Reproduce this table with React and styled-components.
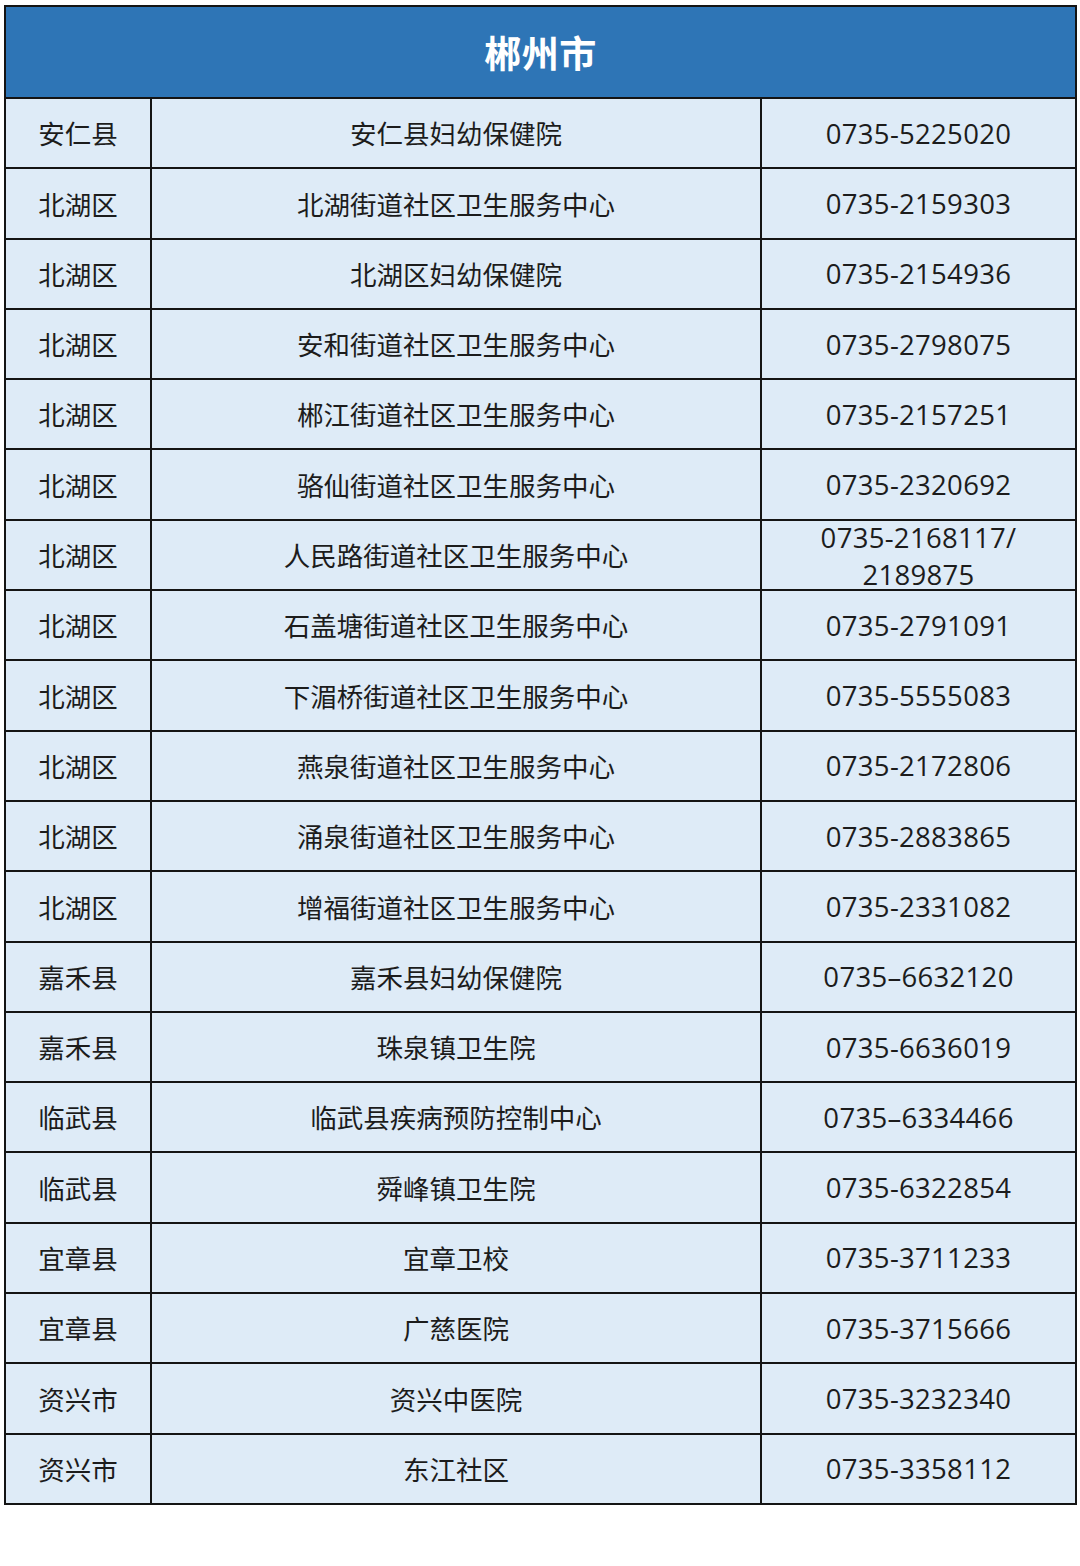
import React from "react";
import styled, { createGlobalStyle } from "styled-components";

const Global = createGlobalStyle`
  html, body { margin: 0; padding: 0; background: #ffffff; }
  body { font-family: "Noto Sans CJK SC", "Noto Sans", sans-serif; }
`;

const Page = styled.div`
  width: 1080px;
  height: 1566px;
  padding: 5px 0 0 4px;
  box-sizing: border-box;
  background: #fff;
`;

const Table = styled.table`
  width: 1071px;
  border-collapse: collapse;
  table-layout: fixed;
  border: 2px solid #141414;
`;

const HeaderCell = styled.th`
  height: 90px;
  padding: 0;
  background: #2e75b6;
  color: #ffffff;
  font-family: "Noto Sans CJK SC", sans-serif;
  font-weight: 700;
  font-size: 37px;
  letter-spacing: 0.5px;
  text-align: center;
  vertical-align: middle;
  border: 2px solid #141414;
`;

const Row = styled.tr`
  height: 70.3px;
`;

const Cell = styled.td`
  padding: 0;
  background: #deebf7;
  border: 2.5px solid #141414;
  text-align: center;
  vertical-align: middle;
  color: #1c1c1c;
  font-family: ${(p) =>
    p.$phone
      ? `"Open Sans", "Noto Sans CJK SC", sans-serif`
      : `"Noto Sans CJK SC", sans-serif`};
  font-size: ${(p) => (p.$phone ? "27.5px" : "26.5px")};
  line-height: 1.2;
  letter-spacing: ${(p) => (p.$phone ? "0.3px" : "0")};
`;

const Wrapped = styled.span`
  display: block;
  line-height: 37px;
  height: 66px;
  margin-top: -6px;
`;

const rows = [
  ["安仁县", "安仁县妇幼保健院", "0735-5225020"],
  ["北湖区", "北湖街道社区卫生服务中心", "0735-2159303"],
  ["北湖区", "北湖区妇幼保健院", "0735-2154936"],
  ["北湖区", "安和街道社区卫生服务中心", "0735-2798075"],
  ["北湖区", "郴江街道社区卫生服务中心", "0735-2157251"],
  ["北湖区", "骆仙街道社区卫生服务中心", "0735-2320692"],
  ["北湖区", "人民路街道社区卫生服务中心", ["0735-2168117/", "2189875"]],
  ["北湖区", "石盖塘街道社区卫生服务中心", "0735-2791091"],
  ["北湖区", "下湄桥街道社区卫生服务中心", "0735-5555083"],
  ["北湖区", "燕泉街道社区卫生服务中心", "0735-2172806"],
  ["北湖区", "涌泉街道社区卫生服务中心", "0735-2883865"],
  ["北湖区", "增福街道社区卫生服务中心", "0735-2331082"],
  ["嘉禾县", "嘉禾县妇幼保健院", "0735–6632120"],
  ["嘉禾县", "珠泉镇卫生院", "0735-6636019"],
  ["临武县", "临武县疾病预防控制中心", "0735–6334466"],
  ["临武县", "舜峰镇卫生院", "0735-6322854"],
  ["宜章县", "宜章卫校", "0735-3711233"],
  ["宜章县", "广慈医院", "0735-3715666"],
  ["资兴市", "资兴中医院", "0735-3232340"],
  ["资兴市", "东江社区", "0735-3358112"],
];

export default function App() {
  return (
    <>
      <Global />
      <Page>
        <Table>
          <colgroup>
            <col style={{ width: "146px" }} />
            <col style={{ width: "610px" }} />
            <col style={{ width: "315px" }} />
          </colgroup>
          <thead>
            <tr>
              <HeaderCell colSpan={3}>郴州市</HeaderCell>
            </tr>
          </thead>
          <tbody>
            {rows.map(([area, org, phone], i) => (
              <Row key={i}>
                <Cell>{area}</Cell>
                <Cell>{org}</Cell>
                <Cell $phone>
                  {Array.isArray(phone) ? (
                    <Wrapped>
                      {phone[0]}
                      <br />
                      {phone[1]}
                    </Wrapped>
                  ) : (
                    phone
                  )}
                </Cell>
              </Row>
            ))}
          </tbody>
        </Table>
      </Page>
    </>
  );
}
